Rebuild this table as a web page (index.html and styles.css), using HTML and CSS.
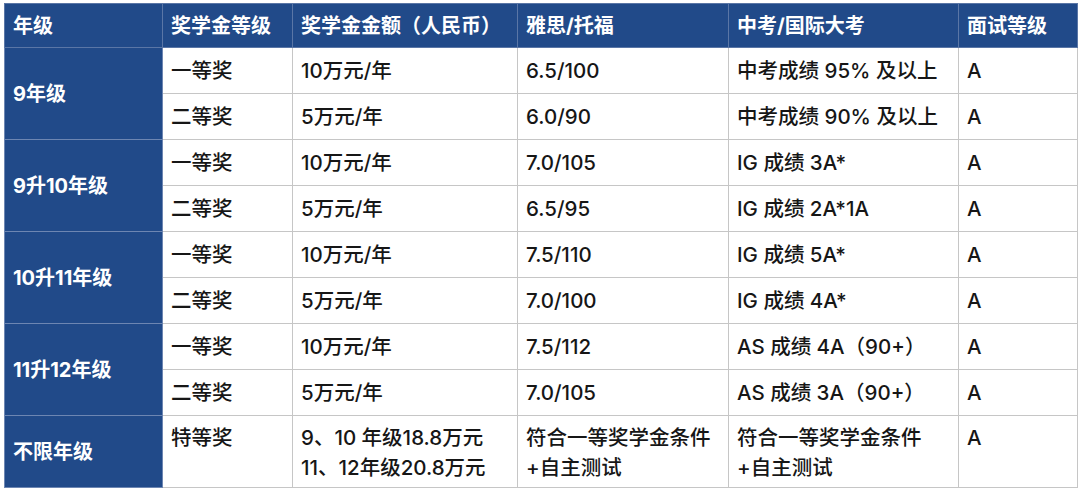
FILE: index.html
```html
<!DOCTYPE html>
<html lang="zh-CN">
<head>
<meta charset="utf-8">
<link rel="stylesheet" href="styles.css">
</head>
<body>
<table class="grid">
  <colgroup>
    <col class="c1"><col class="c2"><col class="c3"><col class="c4"><col class="c5"><col class="c6">
  </colgroup>
  <thead>
    <tr>
      <th>年级</th><th>奖学金等级</th><th>奖学金金额（人民币）</th><th>雅思/托福</th><th>中考/国际大考</th><th>面试等级</th>
    </tr>
  </thead>
  <tbody>
    <tr><td class="grade" rowspan="2">9年级</td><td>一等奖</td><td>10万元/年</td><td>6.5/100</td><td>中考成绩 95% 及以上</td><td>A</td></tr>
    <tr><td>二等奖</td><td>5万元/年</td><td>6.0/90</td><td>中考成绩 90% 及以上</td><td>A</td></tr>
    <tr><td class="grade" rowspan="2">9升10年级</td><td>一等奖</td><td>10万元/年</td><td>7.0/105</td><td>IG 成绩 3A*</td><td>A</td></tr>
    <tr><td>二等奖</td><td>5万元/年</td><td>6.5/95</td><td>IG 成绩 2A*1A</td><td>A</td></tr>
    <tr><td class="grade" rowspan="2">10升11年级</td><td>一等奖</td><td>10万元/年</td><td>7.5/110</td><td>IG 成绩 5A*</td><td>A</td></tr>
    <tr><td>二等奖</td><td>5万元/年</td><td>7.0/100</td><td>IG 成绩 4A*</td><td>A</td></tr>
    <tr><td class="grade" rowspan="2">11升12年级</td><td>一等奖</td><td>10万元/年</td><td>7.5/112</td><td>AS 成绩 4A（90+）</td><td>A</td></tr>
    <tr><td>二等奖</td><td>5万元/年</td><td>7.0/105</td><td>AS 成绩 3A（90+）</td><td>A</td></tr>
    <tr class="last"><td class="grade">不限年级</td><td>特等奖</td><td>9、10 年级18.8万元<br>11、12年级20.8万元</td><td>符合一等奖学金条件<br>+自主测试</td><td>符合一等奖学金条件<br>+自主测试</td><td>A</td></tr>
  </tbody>
</table>
</body>
</html>
```
FILE: styles.css
```css
html, body {
  margin: 0;
  background: #ffffff;
}
body {
  padding: 3px 4px 0 4px;
  font-family: Inter, "Noto Sans CJK SC", sans-serif;
}
.grid {
  border-collapse: collapse;
  table-layout: fixed;
  width: 1073px;
  font-size: 20.5px;
  color: #161616;
  border: 1px solid #b9b9b9;
}
.c1 { width: 158px; }
.c2 { width: 130px; }
.c3 { width: 225px; }
.c4 { width: 211px; }
.c5 { width: 230px; }
.c6 { width: 119px; }
.grid th, .grid td {
  border: 1px solid #c6c6c6;
  padding: 0 8px;
  text-align: left;
  vertical-align: middle;
  height: 45px;
  line-height: 28px;
  font-weight: 500;
  white-space: nowrap;
}
.grid th {
  background: #214a89;
  color: #ffffff;
  font-weight: 700;
  font-size: 20px;
  height: 43px;
  border-color: #5a76a6;
}
.grid td.grade {
  background: #214a89;
  color: #ffffff;
  font-weight: 700;
  font-size: 20px;
  border-color: #6d86b2;
}
.grid tr.last td {
  height: 64px;
  vertical-align: top;
  padding-top: 7px;
  padding-bottom: 0;
  line-height: 30px;
}
.grid tr.last td.grade {
  vertical-align: middle;
  padding-top: 0;
  height: 71px;
}
```
